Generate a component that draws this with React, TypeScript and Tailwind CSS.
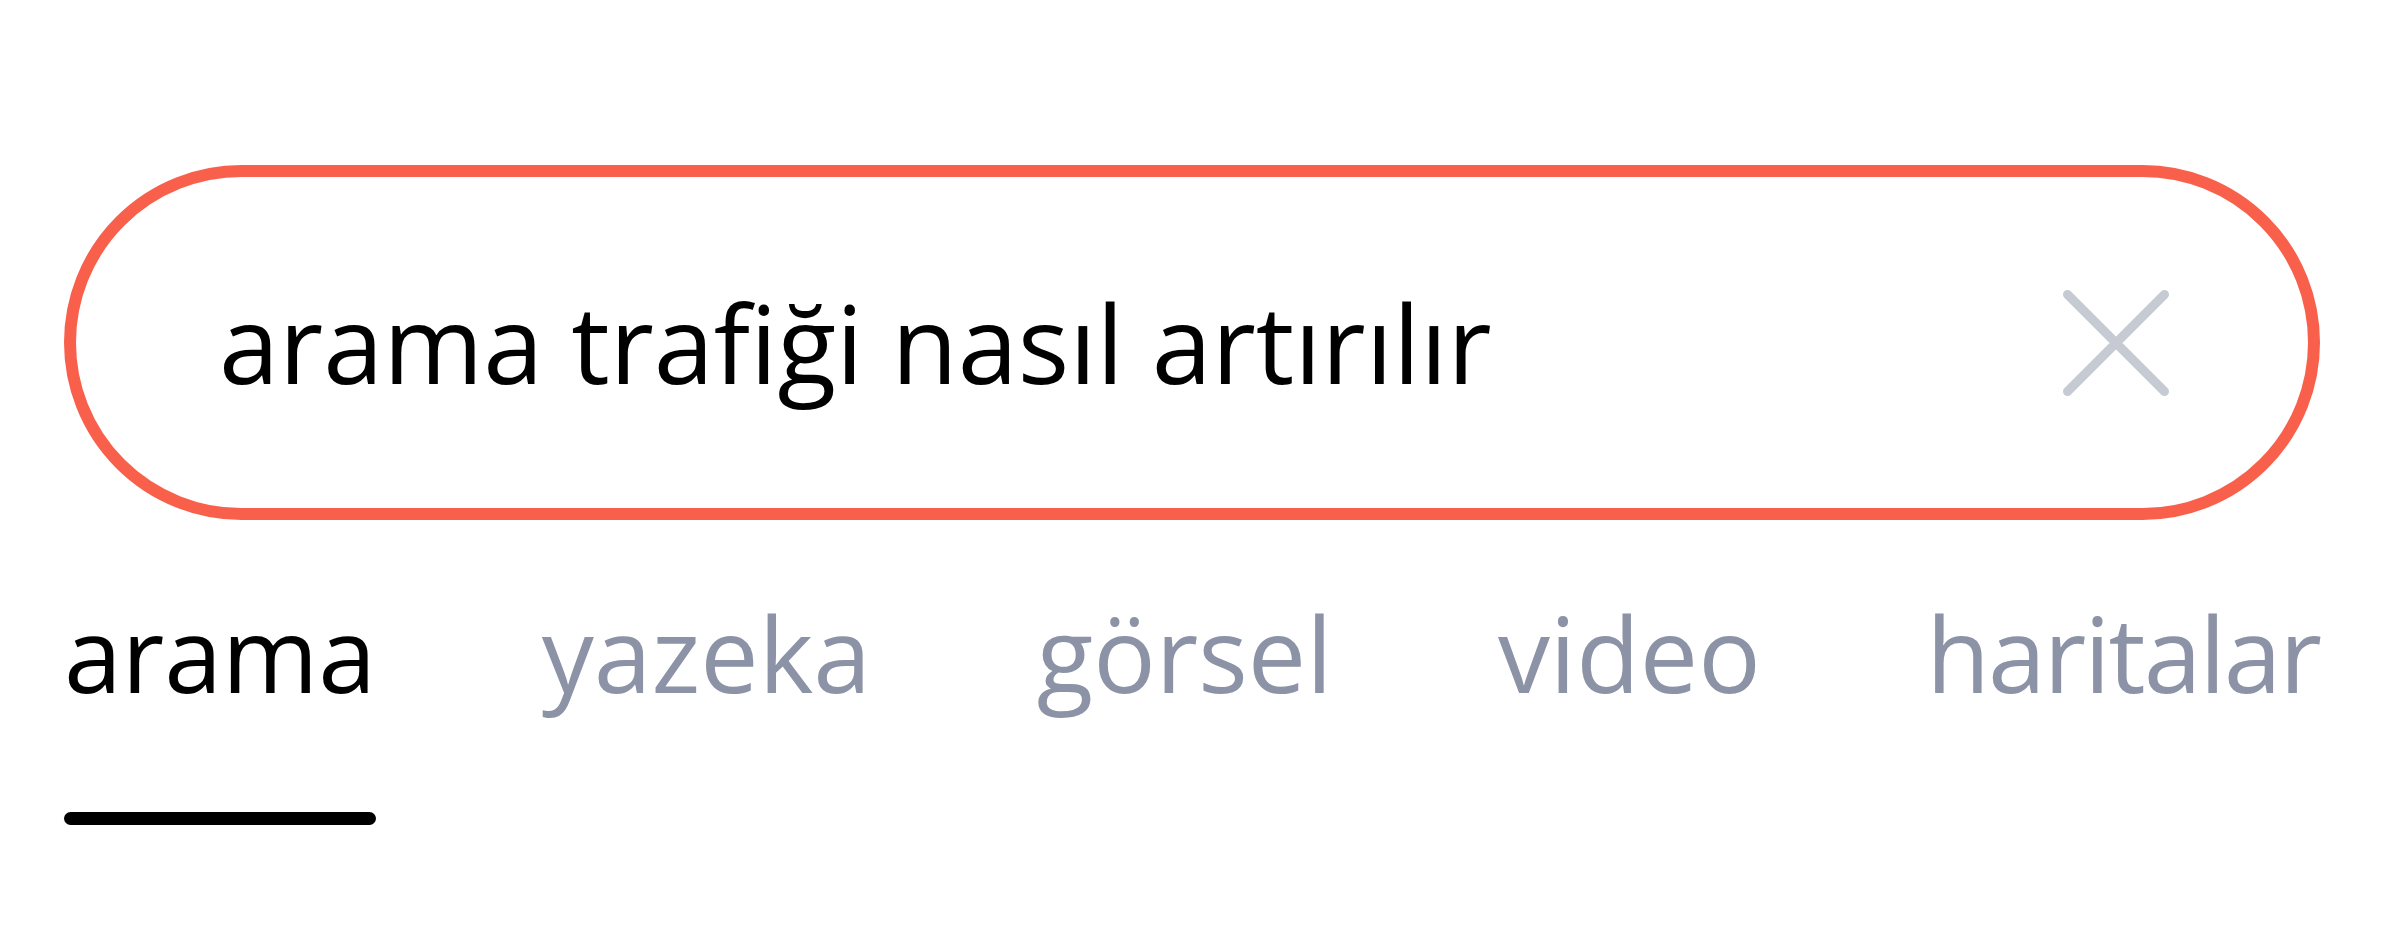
import React from 'react';

const tabs = ['arama', 'yazeka', 'görsel', 'video', 'haritalar'];

const ClearIcon: React.FC = () => (
  <svg width="106" height="106" viewBox="0 0 106 106" fill="none" className="shrink-0">
    <path d="M4.5 4.5L101.5 101.5M101.5 4.5L4.5 101.5" stroke="#c5cad3" strokeWidth="9" strokeLinecap="round" />
  </svg>
);

const App: React.FC = () => {
  const active = 'arama';

  return (
    <div
      className="min-h-screen bg-white px-[64px] pt-[165px]"
      style={{ fontFamily: '"Open Sans", "Noto Sans", sans-serif' }}
    >
      {/* Search field */}
      <div className="flex h-[355px] items-center justify-between rounded-full border-[12px] border-[#f9604b] pl-[143px] pr-[139px]">
        <span className="text-[108px] leading-none text-black">arama trafiği nasıl artırılır</span>
        <ClearIcon />
      </div>

      {/* Tabs */}
      <div className="mt-[81px] flex items-start justify-between">
        {tabs.map((tab) => (
          <div key={tab} className="flex flex-col">
            <span
              className={`text-[104px] leading-none ${tab === active ? 'text-black' : 'text-[#8d93a6]'} ${
                tab === 'haritalar' ? 'tracking-[-2px]' : ''
              }`}
            >
              {tab}
            </span>
            {tab === active && <div className="mt-[107px] h-[13px] rounded-full bg-black" />}
          </div>
        ))}
      </div>
    </div>
  );
};

export default App;
